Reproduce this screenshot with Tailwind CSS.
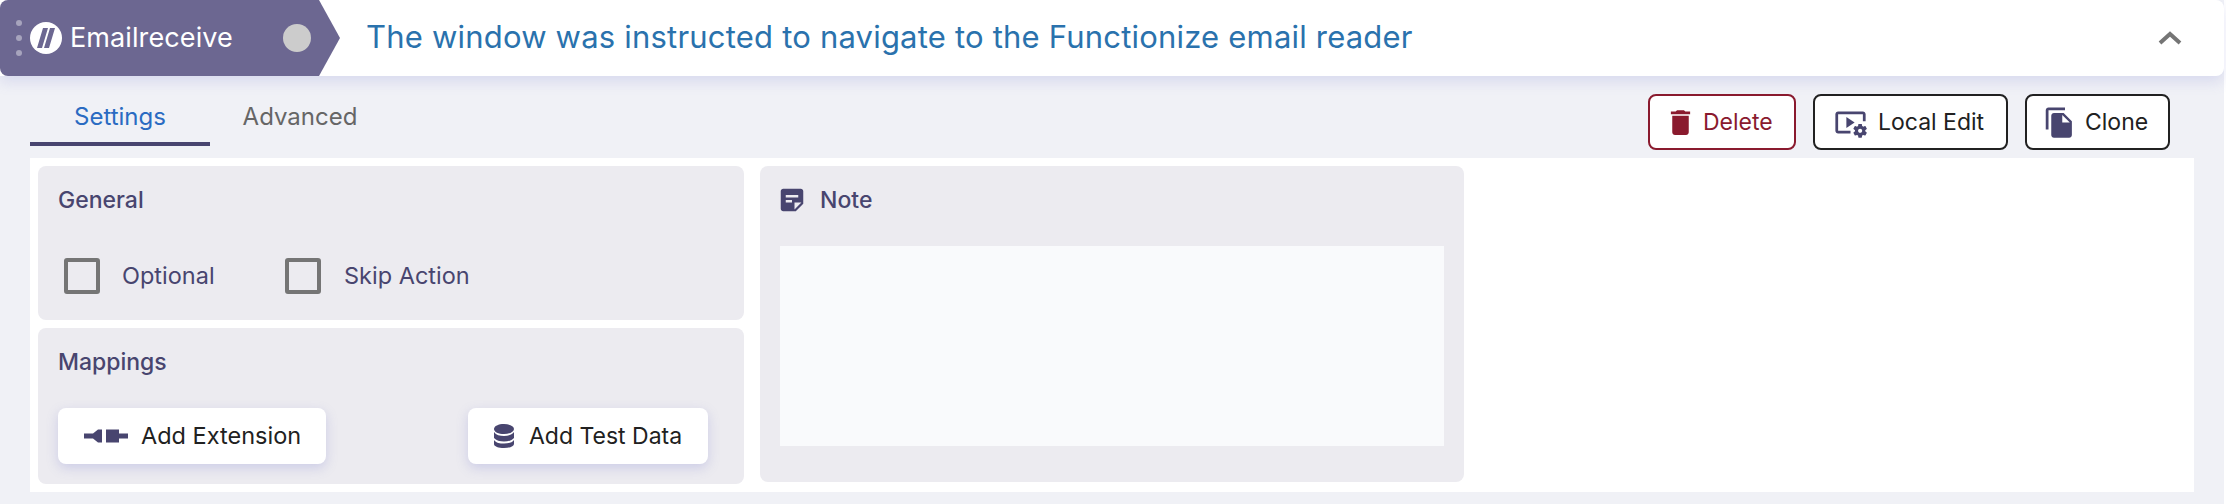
<!DOCTYPE html>
<html lang="en">
<head>
  <meta charset="UTF-8" />
  <title>Emailreceive</title>
  <script src="https://cdn.jsdelivr.net/npm/@tailwindcss/browser@4"></script>
</head>
<body class="bg-white font-['Inter',sans-serif]">
  <div class="w-[2224px] h-[504px] bg-[#f0f1f6] flex flex-col">

    <!-- step header -->
    <header class="h-[76px] shrink-0 bg-white rounded-r-[8px] flex items-center shadow-[0_6px_14px_rgba(110,115,205,0.18)]">
      <div class="w-[340px] h-full shrink-0 bg-[#6c6791] rounded-l-[8px] [clip-path:polygon(0_0,319px_0,340px_38px,319px_76px,0_76px)] flex items-center pl-[16px]">
        <div class="flex flex-col gap-[9px] w-[6px]">
          <span class="size-[6px] rounded-full bg-[#a7a4bd]"></span>
          <span class="size-[6px] rounded-full bg-[#a7a4bd]"></span>
          <span class="size-[6px] rounded-full bg-[#a7a4bd]"></span>
        </div>
        <div class="ml-[8px] size-[32px] rounded-full bg-white flex items-center justify-center">
          <svg viewBox="0 0 32 32" class="size-[32px]"><path d="M13 6h5l-6 20H7zM20 6h5l-6 20h-5z" fill="#6c6791"/></svg>
        </div>
        <span class="ml-[8px] w-[178px] text-[27px] tracking-[0.1px] text-white">Emailreceive</span>
        <span class="ml-[35px] size-[28px] rounded-full bg-[#cccccc]"></span>
      </div>
      <h1 class="ml-[26px] -mt-[2px] text-[31px] tracking-[0.2px] text-[#2a72ad] whitespace-nowrap">The window was instructed to navigate to the Functionize email reader</h1>
      <svg viewBox="0 0 24 14" class="ml-auto mr-[42px] w-[24px] h-[14px]"><path d="M2 12 12 3l10 9" fill="none" stroke="#757575" stroke-width="4"/></svg>
    </header>

    <!-- tabs + actions -->
    <div class="h-[82px] shrink-0 pl-[30px] pr-[54px] flex items-start justify-between">
      <div class="flex text-[24px] h-[70px]">
        <div class="w-[180px] h-full pt-[23px] text-center text-[#2a6bc2] border-b-[4px] border-[#48456f]">Settings</div>
        <div class="w-[180px] pt-[23px] text-center text-[#666666]">Advanced</div>
      </div>
      <div class="flex gap-[17px] pt-[18px] text-[23px] text-[#212121]">
        <button class="w-[148px] h-[56px] bg-white rounded-[8px] border-2 border-[#8a1a2e] text-[#8a1a2e] flex items-center pl-[14px] gap-[6px]">
          <svg viewBox="0 0 24 24" class="size-[33px] fill-[#8a1a2e]"><path d="M6 19c0 1.1.9 2 2 2h8c1.1 0 2-.9 2-2V7H6v12zM19 4h-3.5l-1-1h-5l-1 1H5v2h14V4z"/></svg>
          Delete
        </button>
        <button class="w-[195px] h-[56px] bg-white rounded-[8px] border-2 border-[#212121] flex items-center pl-[19px] gap-[11px]">
          <svg viewBox="0 0 24 24" class="size-[33px] fill-[#48456f]"><path d="M3 6h18v5h2V6c0-1.1-.9-2-2-2H3c-1.1 0-2 .9-2 2v12c0 1.1.9 2 2 2h9v-2H3V6z"/><path d="M15 12l-6-4v8z"/><path d="M22.71 18.43c.03-.29.04-.58.01-.86l1.07-.85c.1-.08.12-.21.06-.32l-1.03-1.79c-.06-.11-.19-.15-.31-.11l-1.28.5c-.23-.17-.48-.31-.75-.42l-.2-1.36c-.02-.13-.13-.22-.25-.22h-2.07c-.12 0-.23.09-.25.22l-.2 1.36c-.26.11-.51.26-.74.42l-1.28-.5c-.12-.05-.25 0-.31.11l-1.03 1.79c-.06.11-.04.24.06.32l1.07.86c-.03.29-.04.58-.01.86l-1.07.85c-.1.08-.12.21-.06.32l1.03 1.79c.06.11.19.15.31.11l1.27-.5c.23.17.48.31.75.42l.2 1.36c.02.12.12.21.25.21h2.07c.12 0 .23-.09.25-.22l.2-1.36c.26-.11.51-.26.74-.42l1.28.5c.12.05.25 0 .31-.11l1.03-1.79c.06-.11.04-.24-.06-.32l-1.06-.85zM19 19.5c-.83 0-1.5-.67-1.5-1.5s.67-1.5 1.5-1.5 1.5.67 1.5 1.5-.67 1.5-1.5 1.5z"/></svg>
          Local Edit
        </button>
        <button class="w-[145px] h-[56px] bg-white rounded-[8px] border-2 border-[#212121] flex items-center pl-[16px] gap-[9px]">
          <svg viewBox="0 0 24 24" class="size-[33px] fill-[#48456f]"><path d="M16 1H4c-1.1 0-2 .9-2 2v14h2V3h12V1zm-1 4l6 6v10c0 1.1-.9 2-2 2H7.99C6.89 23 6 22.1 6 21l.01-14c0-1.1.89-2 1.99-2h7zm-1 7h5.500L14 6.500V12z"/></svg>
          Clone
        </button>
      </div>
    </div>

    <!-- settings panel -->
    <main class="ml-[30px] mr-[30px] h-[334px] shrink-0 bg-white p-[8px] flex gap-[16px] items-start">
      <div class="w-[706px] flex flex-col gap-[8px]">
        <section class="h-[154px] bg-[#ecebf0] rounded-[8px] pl-[20px]">
          <h2 class="pt-[19px] text-[23px] leading-[30px] font-medium text-[#48456f]">General</h2>
          <div class="mt-[43px] flex items-center text-[23.5px] text-[#48456f]">
            <span class="ml-[6px] size-[36px] rounded-[3px] border-[4px] border-[#757575]"></span>
            <span class="ml-[22px] w-[163px]">Optional</span>
            <span class="size-[36px] rounded-[3px] border-[4px] border-[#757575]"></span>
            <span class="ml-[23px]">Skip Action</span>
          </div>
        </section>
        <section class="h-[156px] bg-[#ecebf0] rounded-[8px] px-[20px]">
          <h2 class="pt-[19px] text-[23px] leading-[30px] font-medium text-[#48456f]">Mappings</h2>
          <div class="mt-[31px] flex items-center text-[#212121]">
            <button class="w-[268px] h-[56px] bg-white rounded-[8px] text-[23.5px] flex items-center pl-[26px] gap-[13px] shadow-[0_4px_12px_rgba(110,115,205,0.25)]">
              <svg viewBox="0 0 44 14" class="w-[44px] h-[14px] fill-[#48456f]"><path d="M0 4.500h9L14 .5h4v13h-4L9 9.500H0zM22 .5h13v4h9v5h-9v4H22z"/></svg>
              Add Extension
            </button>
            <button class="ml-[142px] w-[240px] h-[56px] bg-white rounded-[8px] text-[23px] flex items-center pl-[26px] gap-[15px] shadow-[0_4px_12px_rgba(110,115,205,0.25)]">
              <svg viewBox="0 0 20 24" class="w-[20px] h-[24px] fill-[#48456f]"><path d="M10 0c5.500 0 10 2 10 5s-4.500 5-10 5S0 8 0 5s4.500-5 10-5z"/><path d="M0 8c2 3 6 4 10 4s8-1 10-4v6c-2 2.500-6 3.500-10 3.500S2 16.500 0 14z"/><path d="M0 16c2 3 6 3.500 10 3.500S18 19 20 16v4c0 2.500-4.500 4-10 4S0 22.500 0 20z"/></svg>
              Add Test Data
            </button>
          </div>
        </section>
      </div>
      <section class="w-[704px] h-[316px] bg-[#ecebf0] rounded-[8px] px-[20px]">
        <div class="pt-[19px] flex items-center gap-[13px] h-[49px]">
          <svg viewBox="0 0 24 24" class="size-[30px] -ml-[3px] fill-[#48456f]"><path d="M19 3H4.990C3.890 3 3 3.900 3 5l.01 14c0 1.100.89 2 1.990 2h10l6-6V5c0-1.100-.9-2-2-2zM7 8h10v2H7V8zm5 6H7v-2h5v2zm2 5.500V14h5.500L14 19.500z"/></svg>
          <h2 class="text-[23px] font-medium text-[#48456f]">Note</h2>
        </div>
        <div class="mt-[31px] h-[200px] bg-[#f9fafc]"></div>
      </section>
    </main>
  </div>
</body>
</html>
